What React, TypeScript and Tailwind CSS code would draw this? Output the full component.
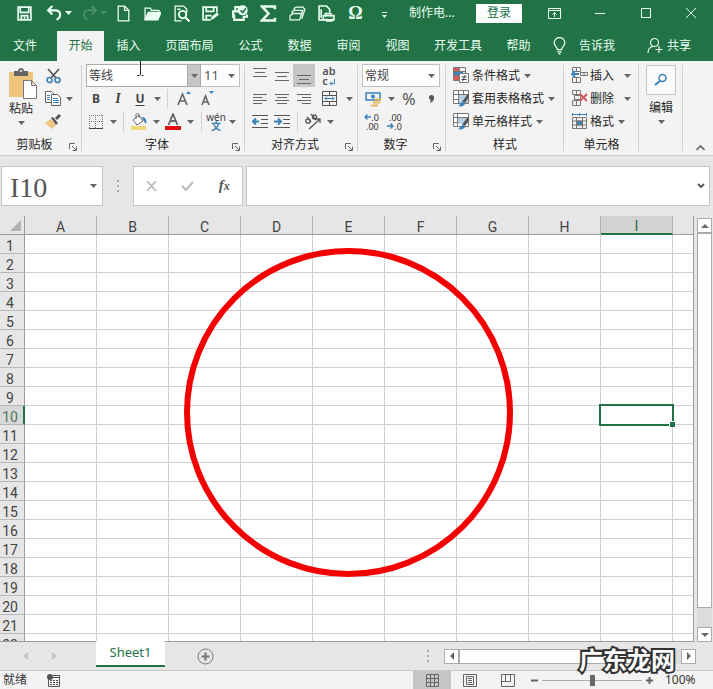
import React from "react";

type Kids = { children?: React.ReactNode };

const Caret = ({ light = false }: { light?: boolean }) => (
  <svg width="7" height="4" viewBox="0 0 7 4" className={light ? "fill-current" : "fill-[#666]"} aria-hidden="true">
    <path d="M0 0h7L3.5 4z" />
  </svg>
);

const Svg = ({ size = 17, children }: Kids & { size?: number }) => (
  <svg width={size} height={size} viewBox="0 0 16 16" fill="none" stroke="currentColor" strokeWidth="1.2" className="shrink-0" aria-hidden="true">
    {children}
  </svg>
);

const Slot = ({ label, w, children, on = false }: Kids & { label: string; w: string; on?: boolean }) => (
  <button aria-label={label} className={`flex h-full shrink-0 items-center justify-center ${w} ${on ? "bg-[#c6c6c6]" : ""}`}>
    {children}
  </button>
);

const Drop = ({ label }: { label: string }) => (
  <Slot label={label} w="w-3">
    <Caret />
  </Slot>
);

const Rule = () => <span className="h-5 w-px shrink-0 bg-[#d0d0d0]" />;

const Row = ({ children, className = "" }: Kids & { className?: string }) => (
  <div className={`flex h-[23px] items-center ${className}`}>{children}</div>
);

function Group({ title, width, launcher = false, children }: Kids & { title: string; width: string; launcher?: boolean }) {
  return (
    <section aria-label={title} className={`relative flex shrink-0 flex-col pt-[3px] ${width}`}>
      <div className="h-[69px]">{children}</div>
      <div className="flex flex-1 items-center pt-0.5">
        <span className="flex-1 text-center">{title}</span>
        {launcher && (
          <button aria-label={`${title}设置`} className="w-[13px] pt-1">
            <svg width="8" height="8" viewBox="0 0 8 8" fill="none" stroke="#666" aria-hidden="true">
              <path d="M.5 6V.5H6M3 3l4 4M7.500 3.500v4h-4" />
            </svg>
          </button>
        )}
      </div>
      <span className="absolute right-0 top-1 h-[86px] w-px bg-[#d0d0d0]" />
    </section>
  );
}

const Lines = ({ rows }: { rows: number[][] }) => (
  <svg width="14" height="16" viewBox="0 0 14 16" stroke="#666" aria-hidden="true">
    {rows.map(([y, a, b]) => (
      <path key={y} d={`M${a} ${y}.5H${b}`} />
    ))}
  </svg>
);

const quick: [string, React.ReactNode][] = [
  ["新建", <path d="M3 1h6l4 4v10H3zM9 1v4h4" />],
  ["打开", <><path d="M1 14V3h5l1 2h7v3" /><path d="M1 14 4 7h12l-3 7z" fill="currentColor" /></>],
  ["查找文档", <><path d="M13 7V4l-3-3H2v14h6M4 4h3" /><circle cx="9" cy="9" r="3.500" strokeWidth="1.800" /><path d="m11.500 11.500 4 4" strokeWidth="2" /></>],
  ["另存为", <><path d="M8 14H1V2h13v5M4 2v4h7V2M4 14v-4h5" strokeWidth="1.600" /><path d="m8 14 1-3 5-4 2 2-5 4z" fill="currentColor" stroke="none" /></>],
  ["快速打印", <><path d="M4 6V2h4M2 12V6h5M3 9v5h9v-3h3V9" strokeWidth="2" /><circle cx="11" cy="5" r="4" fill="#eafff2" strokeWidth="1.500" /><path d="m9 5 2 2 3-4" stroke="#217346" strokeWidth="1.500" /></>],
  ["求和", <path d="M14 4V1.500H2L8 8l-6 6.500h12V12" strokeWidth="2.400" />],
  ["名册", <path d="M1 10 4 8h8l-2 6H1zM3 8V6l2-1h8l-2 5M5 5V3l2-1h6l2 2-3 9" />],
  ["打印预览", <><path d="M6 14H1V1h7l3 3v3M3 4v8" strokeWidth="1.500" /><path d="M7 11V8h5v3M5 10h10v4H5zM8 13v2h5v-2" strokeWidth="1.500" /></>],
];

function TitleBar() {
  return (
    <header className="flex h-[30px] shrink-0 items-center pb-1 text-[#eafff2]">
      <button aria-label="保存" className="ml-2.5 flex w-[29px] justify-center">
        <Svg><path d="M2 2h12v12H2zM4 2v5h8V2M5 14v-4h6v4M8 11v2" strokeWidth="1.600" /></Svg>
      </button>
      <button aria-label="撤消" className="flex w-[35px] items-center justify-end gap-0.5 pr-0.5">
        <Svg><path d="M6 1 2 5l4 4M2 5h7c5 0 6 6 1 9" strokeWidth="2" /></Svg>
        <Caret light />
      </button>
      <button aria-label="恢复" className="flex w-[35px] items-center justify-end gap-0.5 pr-0.5 text-[#4b9068]">
        <Svg><path d="m10 1 4 4-4 4M14 5H7c-5 0-6 6-1 9" strokeWidth="1.800" /></Svg>
        <Caret light />
      </button>
      {quick.map(([label, art]) => (
        <button key={label} aria-label={label} className="flex w-[29px] shrink-0 justify-center"><Svg>{art}</Svg></button>
      ))}
      <button aria-label="符号" className="w-[29px] font-['Liberation_Serif',serif] text-lg font-bold leading-none">Ω</button>
      <button aria-label="自定义快速访问工具栏" className="flex w-[29px] flex-col items-center gap-0.5 pt-1">
        <span className="h-px w-[5px] bg-current" />
        <svg width="5" height="3" viewBox="0 0 5 3" className="fill-current" aria-hidden="true"><path d="M0 0h5L2.500 3z" /></svg>
      </button>
      <h1 className="ml-2.5 flex-1 truncate">制作电...</h1>
      <button className="mr-[9px] h-[19px] w-[46px] bg-white text-[#217346]">登录</button>
      <button aria-label="功能区显示选项" className="flex w-[46px] justify-center"><svg width="13" height="11" viewBox="0 0 13 11" fill="none" stroke="currentColor" aria-hidden="true"><path d="M.5.5h12v10H.5zM1 2.500h11M6.500 9V4.500M4.500 6.500l2-2 2 2" /></svg></button>
      <button aria-label="最小化" className="flex w-[46px] justify-center"><span className="h-px w-2.5 bg-current" /></button>
      <button aria-label="最大化" className="flex w-[46px] justify-center"><span className="size-2.5 border border-current" /></button>
      <button aria-label="关闭" className="flex w-11 justify-center"><svg width="10" height="10" viewBox="0 0 10 10" stroke="currentColor" aria-hidden="true"><path d="m0 0 10 10M10 0 0 10" /></svg></button>
    </header>
  );
}

function Tabs() {
  return (
    <nav className="flex h-[31px] shrink-0 items-stretch text-[#eafff2]">
      <button className="w-[50px]">文件</button>
      <button className="ml-[7px] mt-px w-[47px] bg-[#f3f3f3] text-[#217346]">开始</button>
      <button className="w-[49px]">插入</button>
      <button className="w-[73px]">页面布局</button>
      {["公式", "数据", "审阅", "视图"].map((t) => <button key={t} className="w-[49px]">{t}</button>)}
      <button className="w-[72px]">开发工具</button>
      <button className="w-[49px]">帮助</button>
      <button className="ml-[9px] flex items-center gap-3">
        <svg width="15" height="18" viewBox="0 0 14 17" fill="none" stroke="currentColor" strokeWidth="1.200" aria-hidden="true"><path d="M5 12c0-3-3-3-3-6.500a5 5 0 0 1 10 0C12 9 9 9 9 12zM5 14h4M6 16h2" /></svg>
        告诉我
      </button>
      <button className="ml-auto mr-[22px] flex items-center gap-1">
        <svg width="16" height="17" viewBox="0 0 16 17" fill="none" stroke="currentColor" strokeWidth="1.200" aria-hidden="true"><circle cx="7.500" cy="5.500" r="4" /><path d="M1 16c0-4 2-6 5-6.500M12 9v7M8.500 12.500h7" /></svg>
        共享
      </button>
    </nav>
  );
}

const Grid = ({ children }: Kids) => <svg width="17" height="17" viewBox="0 0 17 17" fill="none" stroke="#777" className="shrink-0" aria-hidden="true">{children}</svg>;

const brush = <><path d="m9 12 5-7 2-1v3l-4 6z" fill="#555" stroke="none" /><path d="M5 16c2 0 2-4 5-4l2 2c-1 2-4 3-7 2z" fill="#3b83b8" stroke="none" /></>;

const StyleRow = ({ text, art, push = "" }: { text: string; art: React.ReactNode; push?: string }) => (
  <Row>
    <button className="flex items-center gap-0.5">
      <Grid>{art}</Grid>
      {text}
      <span className={`ml-0.5 ${push}`}><Caret /></span>
    </button>
  </Row>
);

const caretBox = "pointer-events-none absolute right-1 top-0 flex h-full items-center";

function Ribbon() {
  return (
    <div className="relative flex h-[95px] shrink-0 border-b border-[#cfcfcf] bg-[#f3f3f3]">
      <Group title="剪贴板" width="w-[82px]" launcher>
        <div className="flex">
          <button className="flex w-[42px] flex-col items-center pt-1">
            <svg width="30" height="32" viewBox="0 0 30 32" className="ml-1" aria-hidden="true">
              <path d="M1 4h24v25H1z" fill="#edc57c" />
              <path d="M6 8V3h4c0-4 6-4 6 0h4v5z" fill="#666" /><circle cx="13" cy="3" r="1" fill="#fff" />
              <path d="M15.500 12.500h8l5 5v13h-13zM23.500 12.500v5h5" fill="#fff" stroke="#777" />
            </svg>
            <span className="pt-px leading-4">粘贴</span>
            <span className="flex h-3 items-center"><Caret /></span>
          </button>
          <div className="pl-px">
            <Row><Slot label="剪切" w="w-5"><svg width="15" height="16" viewBox="0 0 15 16" fill="none" strokeWidth="1.700" aria-hidden="true"><path d="m2 1 8 9M13 1 5 10" stroke="#555" /><circle cx="3.500" cy="12" r="2.500" stroke="#3b83b8" /><circle cx="11.500" cy="12" r="2.500" stroke="#3b83b8" /></svg></Slot></Row>
            <Row>
              <Slot label="复制" w="w-5"><svg width="16" height="15" viewBox="0 0 16 15" fill="#fff" stroke="#666" aria-hidden="true"><path d="M.5.5h6l3 3v8h-9z" /><path d="M6.500 3.500h6l3 3v8h-9z" /><path d="M2 4.500h3M2 6.500h3M2 8.500h3M8 7.500h5M8 9.500h6M8 11.500h6" stroke="#3b83b8" /></svg></Slot>
              <Drop label="复制选项" />
            </Row>
            <Row><Slot label="格式刷" w="w-5"><svg width="16" height="15" viewBox="0 0 16 15" aria-hidden="true"><path d="m0 9 6-4 5 6-4 4z" fill="#edc57c" /><path d="m6 4 2-1 5 6-2 2zM10 4l4-4 2 2-4 4z" fill="#555" /></svg></Slot></Row>
          </div>
        </div>
      </Group>

      <Group title="字体" width="w-[163px]" launcher>
        <Row className="ml-1 mr-[5px]">
          <div className="flex h-full w-[115px] border border-[#ababab] bg-white">
            <input aria-label="字体名称" defaultValue="等线" className="w-0 flex-1 pl-0.5 text-[#444] outline-none" />
            <button aria-label="选择字体" className="flex w-[13px] items-center justify-center border-l border-[#ababab] bg-[#c6c6c6]"><Caret /></button>
          </div>
          <div className="relative h-full flex-1 border-y border-r border-[#c0c0c0] bg-white">
            <select aria-label="字号" className="size-full appearance-none pl-[3px] text-[13px] text-[#555] outline-none"><option>11</option></select>
            <span className={caretBox}><Caret /></span>
          </div>
        </Row>
        <Row className="pl-[3px] text-[#444]">
          <Slot label="加粗" w="w-[22px]"><b>B</b></Slot>
          <Slot label="倾斜" w="w-[22px]"><i className="font-['Liberation_Serif',serif] text-sm font-bold">I</i></Slot>
          <Slot label="下划线" w="w-[22px]"><b className="underline underline-offset-2">U</b></Slot>
          <Drop label="下划线选项" />
          <span className="w-1" /><Rule /><span className="w-1" />
          <Slot label="增大字号" w="w-6"><svg width="15" height="16" viewBox="0 0 15 16" fill="none" strokeWidth="1.600" stroke="#666" aria-hidden="true"><path d="M1 14 5.500 3 10 14M3 10h5" /><path d="m9 3 2.500-3L14 3z" fill="#3b83b8" stroke="none" /></svg></Slot>
          <Slot label="减小字号" w="w-6"><svg width="15" height="16" viewBox="0 0 15 16" fill="none" strokeWidth="1.600" stroke="#666" aria-hidden="true"><path d="M1 14 4.500 5 8 14M2.500 11h4" /><path d="m8 0 2.500 3L13 0z" fill="#3b83b8" stroke="none" /></svg></Slot>
        </Row>
        <Row className="pl-[3px]">
          <Slot label="边框" w="w-[22px]"><svg width="14" height="14" viewBox="0 0 14 14" fill="none" stroke="#777" aria-hidden="true"><path d="M0 .5h14M0 6.500h14M.5 0v13M6.500 0v13M13.500 0v13" strokeDasharray="1 1" /><path d="M0 13.500h14" stroke="#444" /></svg></Slot>
          <Drop label="边框选项" />
          <span className="w-1" /><Rule /><span className="w-1" />
          <Slot label="填充颜色" w="w-[22px]"><svg width="16" height="17" viewBox="0 0 16 17" fill="none" aria-hidden="true"><path d="M0 13h15v4H0z" fill="#f0d878" /><path d="m2 7 6-5 4 6-6 4zM5 6V2c0-2 3-2 3 0v3" stroke="#666" fill="#fff" /><path d="M11 4c4 0 5 4 4 7l-3-4z" fill="#3b83b8" /></svg></Slot>
          <Drop label="填充颜色选项" />
          <Slot label="字体颜色" w="w-[22px]"><svg width="16" height="17" viewBox="0 0 16 17" aria-hidden="true"><path d="M0 13h16v4H0z" fill="#e20d0d" /><path d="M3.500 12 8 1l4.500 11M5 8h6" fill="none" stroke="#666" strokeWidth="1.800" /></svg></Slot>
          <Drop label="字体颜色选项" />
          <span className="w-[5px]" /><Rule /><span className="w-1" />
          <Slot label="拼音指南" w="w-5"><span className="flex flex-col items-center text-[10px] leading-[9px] text-[#444]">wén<b className="leading-[9px] text-[#3b83b8]">文</b></span></Slot>
          <Drop label="拼音选项" />
        </Row>
      </Group>

      <Group title="对齐方式" width="w-[113px]" launcher>
        <Row className="pl-1">
          <Slot label="顶端对齐" w="w-[22px]"><Lines rows={[[0, 0, 14], [4, 2, 12], [8, 0, 14]]} /></Slot>
          <Slot label="垂直居中" w="w-[22px]"><Lines rows={[[4, 0, 14], [8, 2, 12], [12, 0, 14]]} /></Slot>
          <Slot label="底端对齐" w="w-[22px]" on><Lines rows={[[7, 0, 14], [11, 2, 12], [15, 0, 14]]} /></Slot>
          <Slot label="自动换行" w="w-[28px]">
            <span className="flex flex-col items-start text-[11px] font-semibold leading-[10px] text-[#555]">
              <span>ab</span>
              <span className="flex items-end gap-px">c<svg width="6" height="7" viewBox="0 0 6 7" fill="none" stroke="#3b83b8" aria-hidden="true"><path d="M5.500 0v4.500H1M3 2.500l-2 2 2 2" /></svg></span>
            </span>
          </Slot>
        </Row>
        <Row className="pl-1">
          <Slot label="左对齐" w="w-[22px]"><Lines rows={[[3, 0, 14], [6, 0, 9], [9, 0, 14], [12, 0, 9]]} /></Slot>
          <Slot label="居中" w="w-[22px]"><Lines rows={[[3, 0, 14], [6, 2, 12], [9, 0, 14], [12, 2, 12]]} /></Slot>
          <Slot label="右对齐" w="w-[22px]"><Lines rows={[[3, 0, 14], [6, 5, 14], [9, 0, 14], [12, 5, 14]]} /></Slot>
          <Slot label="合并后居中" w="w-[28px]"><svg width="15" height="15" viewBox="0 0 15 15" fill="none" stroke="#555" aria-hidden="true"><path d="M.5.5h14v14H.5zM1 4.500h13M1 10.500h13M7.500 0v4M7.500 11v4" /><path d="M3 7.500h9M5 5.500l-2 2 2 2M10 5.500l2 2-2 2" stroke="#3b83b8" /></svg></Slot>
          <Drop label="合并选项" />
        </Row>
        <Row className="pl-1">
          <Slot label="减少缩进量" w="w-[22px]"><svg width="16" height="13" viewBox="0 0 16 13" fill="none" stroke="#555" aria-hidden="true"><path d="M0 .5h16M9 4.500h7M9 8.500h7M0 12.500h16" /><path d="M7 6.500H1M4 3.500l-3 3 3 3" stroke="#3b83b8" strokeWidth="2" /></svg></Slot>
          <Slot label="增加缩进量" w="w-[22px]"><svg width="16" height="13" viewBox="0 0 16 13" fill="none" stroke="#555" aria-hidden="true"><path d="M0 .5h16M9 4.500h7M9 8.500h7M0 12.500h16" /><path d="M0 6.500h6M4 3.500l3 3-3 3" stroke="#3b83b8" strokeWidth="2" /></svg></Slot>
          <span className="w-1" /><Rule /><span className="w-1" />
          <Slot label="方向" w="w-[22px]"><svg width="18" height="17" viewBox="0 0 18 17" fill="none" stroke="#555" strokeWidth="1.300" aria-hidden="true"><circle cx="4" cy="8" r="2.200" /><path d="m3 4 4 5M7 1l5 6M5 16 16 6M16 10V6h-4" /><circle cx="10.500" cy="4" r="2" /></svg></Slot>
          <Drop label="方向选项" />
        </Row>
      </Group>

      <Group title="数字" width="w-[88px]" launcher>
        <Row className="ml-1 mr-1.5">
          <div className="relative size-full border border-[#c0c0c0] bg-white">
            <select aria-label="数字格式" className="size-full appearance-none pl-0.5 text-[#444] outline-none"><option>常规</option></select>
            <span className={caretBox}><Caret /></span>
          </div>
        </Row>
        <Row className="pl-1">
          <Slot label="会计数字格式" w="w-[23px]"><svg width="17" height="16" viewBox="0 0 17 16" fill="none" aria-hidden="true"><path d="M1 2h14v7H1z" stroke="#3b83b8" strokeWidth="1.500" /><circle cx="8" cy="5.500" r="2" fill="#3b83b8" /><path d="M10 8.500h6M8 11.500h7M6 14.500h7" stroke="#e8b657" strokeWidth="2" /></svg></Slot>
          <Drop label="会计格式选项" />
          <Slot label="百分比样式" w="w-6"><span className="text-base text-[#555]">%</span></Slot>
          <Slot label="千位分隔样式" w="w-5"><svg width="5" height="8" viewBox="0 0 5 8" fill="#555" aria-hidden="true"><circle cx="2.500" cy="2.500" r="2.500" /><path d="M5 2c0 3-1 5-4 6l1-4z" /></svg></Slot>
        </Row>
        <Row className="pl-0.5 text-[9px] leading-[9px] text-[#333]">
          <Slot label="增加小数位数" w="w-[23px]">
            <span className="flex flex-col items-end">
              <span className="flex items-center"><svg width="7" height="6" viewBox="0 0 7 6" fill="none" stroke="#3b83b8" strokeWidth="1.400" aria-hidden="true"><path d="M7 3H1M3.500.500 1 3l2.500 2.500" /></svg>.0</span>
              <span>.00</span>
            </span>
          </Slot>
          <Slot label="减少小数位数" w="w-[23px]">
            <span className="flex flex-col items-end">
              <span>.00</span>
              <span className="flex items-center"><svg width="7" height="6" viewBox="0 0 7 6" fill="none" stroke="#3b83b8" strokeWidth="1.400" aria-hidden="true"><path d="M0 3h6M3.500.500 6 3 3.500 5.500" /></svg>.0</span>
            </span>
          </Slot>
        </Row>
      </Group>

      <Group title="样式" width="w-[118px]">
        <div className="pl-[7px]">
          <StyleRow text="条件格式" art={<><path d="M.5.5h12v13H.5zM.5 4.500h12M.5 8.500h12M6.500.500v13" /><path d="M1 1h5v3H1zM1 9h5v4H1z" fill="#d9595a" stroke="none" /><path d="M1 5h9v3H1z" fill="#3b83b8" stroke="none" /><path d="M6.500 6.500h9v9h-9z" fill="#fff" /><path d="M8.500 10h5M8.500 12.500h5M12.500 8l-3 6" stroke="#444" /></>} />
          <StyleRow text="套用表格格式" art={<><path d="M.5.5h15v13H.5zM.5 4.500h15M.5 9.500h15M5.500.500v13M10.500.500v13" fill="#fff" /><path d="M6 5h9v8H6z" fill="#b6d0e5" stroke="none" />{brush}</>} />
          <StyleRow text="单元格样式" art={<><path d="M.5.5h15v13H.5zM.5 4.500h15M4.500.500v13M.5 9.500h15" fill="#fff" /><path d="M5 5h9v6H5z" fill="#b6d0e5" stroke="none" />{brush}</>} />
        </div>
      </Group>

      <Group title="单元格" width="w-[75px]">
        <div className="pl-[7px]">
          <StyleRow text="插入" push="pl-1.5" art={<><path d="M1.500.500h8v4h-8zM5.500.500v4M1.500 10.500h8v5h-8zM5.500 10v5M9.500 5.500h7v3h-7zM13 5v3" /><path d="M8 7H1M4 4 1 7l3 3" stroke="#3b83b8" strokeWidth="1.800" /></>} />
          <StyleRow text="删除" push="pl-1.5" art={<><path d="M1.500.500h8v4h-8zM5.500.500v4M1.500 10.500h8v5h-8zM5.500 10v5M3.500 5.500h6v4h-6z" /><path d="m9 4 7 7M16 4l-7 7" stroke="#d9595a" strokeWidth="2" /></>} />
          <StyleRow text="格式" art={<><path d="M1.500 4.500h14v11h-14zM1 8h15M1 12h15M5.500 4v12M11.500 4v12" /><path d="M6 8h5v4H6z" fill="#3b83b8" /><path d="M1 1.500h14M1.500 0v3M8.500 0v3M15.500 0v3" stroke="#3b83b8" /></>} />
        </div>
      </Group>

      <section aria-label="编辑" className="relative flex w-11 shrink-0 flex-col items-center pt-1">
        <button className="flex flex-col items-center">
          <span className="flex size-[30px] items-center justify-center border border-[#c6c6c6] bg-[#fbfbfb]">
            <svg width="14" height="14" viewBox="0 0 14 14" fill="none" stroke="#3b83b8" aria-hidden="true"><circle cx="8.500" cy="5" r="3.500" strokeWidth="1.500" /><path d="m6 8-5 4" strokeWidth="2" /></svg>
          </span>
          <span className="pt-[3px] leading-5">编辑</span>
          <span className="flex h-2 items-center"><Caret /></span>
        </button>
        <span className="absolute right-0 top-1 h-[86px] w-px bg-[#d0d0d0]" />
      </section>
      <button aria-label="折叠功能区" className="ml-auto mr-2 self-end pb-1">
        <svg width="9" height="6" viewBox="0 0 9 6" fill="none" stroke="#666" strokeWidth="1.600" aria-hidden="true"><path d="m.5 5 4-4 4 4" /></svg>
      </button>
      <svg width="7" height="16" viewBox="0 0 7 16" fill="none" stroke="#222" className="pointer-events-none absolute left-[137px] top-0" aria-hidden="true"><path d="M3.500 0v14M.5 14.500h2M4.500 14.500h2" /></svg>
    </div>
  );
}

const Dots = () => (
  <span className="flex flex-col gap-[3px]">
    {[0, 1, 2].map((n) => <i key={n} className="size-0.5 bg-[#aaa]" />)}
  </span>
);

function FormulaBar() {
  return (
    <div className="flex h-[60px] shrink-0 py-2.5 pl-px pr-[3px]">
      <div className="flex w-[102px] items-center border border-[#c6c6c6] bg-white">
        <input aria-label="名称框" defaultValue="I10" className="w-0 flex-1 pl-2 pt-1 font-['Liberation_Serif',serif] text-[28px] leading-8 text-[#555] outline-none" />
        <button aria-label="名称列表" className="mr-[5px]"><Caret /></button>
      </div>
      <div className="flex w-[30px] items-center justify-center"><Dots /></div>
      <div className="flex w-[110px] items-center justify-around border border-[#c6c6c6] bg-white">
        <button aria-label="取消"><svg width="11" height="10" viewBox="0 0 11 10" stroke="#bbb" strokeWidth="1.800" aria-hidden="true"><path d="m1 0 9 10M10 0 1 10" /></svg></button>
        <button aria-label="输入"><svg width="13" height="10" viewBox="0 0 13 10" fill="none" stroke="#bbb" strokeWidth="2.200" aria-hidden="true"><path d="m1 5 4 4 7-8" /></svg></button>
        <button aria-label="插入函数" className="font-['Liberation_Serif',serif] text-[15px] font-bold italic leading-none text-[#555]">f<span className="text-xs">x</span></button>
      </div>
      <div className="ml-[3px] flex flex-1 items-center border border-[#c6c6c6] bg-white">
        <input aria-label="编辑栏" className="w-0 flex-1 self-stretch px-2 outline-none" />
        <button aria-label="展开编辑栏" className="mr-1"><svg width="8" height="6" viewBox="0 0 8 6" fill="none" stroke="#555" strokeWidth="1.800" aria-hidden="true"><path d="m1 1 3 3 3-3" /></svg></button>
      </div>
    </div>
  );
}

const cols = "ABCDEFGHI".split("");
const rows = Array.from({ length: 22 }, (_, n) => n + 1);

const Arrow = ({ d, label, className = "" }: { d: string; label: string; className?: string }) => (
  <button aria-label={label} className={`flex size-[15px] shrink-0 items-center justify-center border border-[#ababab] bg-white ${className}`}>
    <svg width="8" height="8" viewBox="0 0 8 8" fill="#666" aria-hidden="true"><path d={d} /></svg>
  </button>
);

function Sheet() {
  return (
    <div className="flex min-h-0 flex-1">
      <div className="relative min-w-0 flex-1 overflow-hidden border-b border-[#9b9b9b]">
        <table className="w-full table-fixed border-separate border-spacing-0 border-r border-[#9b9b9b] bg-white font-[Roboto,sans-serif] text-sm leading-none">
          <colgroup>
            <col className="w-[25px]" />
            {cols.map((c) => <col key={c} className="w-[72px]" />)}
            <col />
          </colgroup>
          <thead>
            <tr className="h-[19px] text-[#444]">
              <th aria-label="全选" className="border-b border-r border-[#9b9b9b] bg-[#e6e6e6] p-0">
                <svg width="11" height="11" viewBox="0 0 11 11" className="ml-auto mr-[3px] fill-[#b2b2b2]" aria-hidden="true"><path d="M11 0v11H0z" /></svg>
              </th>
              {cols.map((c) => (
                <th key={c} scope="col" className={`border-r border-r-[#b0b0b0] p-0 pt-[3px] font-normal ${c === "I" ? "border-b-2 border-b-[#217346] bg-[#d2d2d2] text-[#217346]" : "border-b border-b-[#9b9b9b] bg-[#e6e6e6]"}`}>{c}</th>
              ))}
              <th aria-label="J" className="border-b border-[#9b9b9b] bg-[#e6e6e6] p-0" />
            </tr>
          </thead>
          <tbody>
            {rows.map((r) => (
              <tr key={r} className="h-[19px]">
                <th scope="row" className={`border-b border-b-[#b8b8b8] p-0 pt-[3px] font-normal ${r === 10 ? "border-r-2 border-r-[#217346] bg-[#d8d8d8] pr-[3px] text-[#4f7a63]" : "border-r border-r-[#9b9b9b] bg-[#e6e6e6] pr-1 text-[#444]"}`}>{r}</th>
                {cols.map((c) => (
                  <td key={c} className="relative border-b border-r border-[#d0d0d0] p-0">
                    {c === "I" && r === 10 && (
                      <span className="absolute -inset-0.5 z-10 border-2 border-[#217346]">
                        <i className="absolute -bottom-[3px] -right-[3px] size-1.5 border-l border-t border-white bg-[#217346]" />
                      </span>
                    )}
                  </td>
                ))}
                <td className="border-b border-[#d0d0d0] p-0" />
              </tr>
            ))}
          </tbody>
        </table>
        <svg width="330" height="330" viewBox="0 0 330 330" fill="none" className="absolute left-[184px] top-8" role="img" aria-label="红色圆形">
          <circle cx="164.500" cy="164.500" r="161.500" stroke="#f40000" strokeWidth="6" />
        </svg>
      </div>
      <div className="ml-[3px] mr-px mt-0.5 flex flex-col bg-[#dcdcdc]">
        <Arrow label="向上滚动" d="M0 6h8L4 2z" />
        <div className="flex-1 border border-[#ababab] bg-white" />
        <div className="h-[19px]" />
        <Arrow label="向下滚动" d="M0 2h8L4 6z" />
      </div>
    </div>
  );
}

function SheetTabs() {
  return (
    <div className="relative flex h-7 shrink-0 items-center">
      <button aria-label="上一个工作表" className="flex w-[50px] justify-center"><svg width="5" height="8" viewBox="0 0 5 8" fill="#c0c0c0" aria-hidden="true"><path d="M5 0v8L0 4z" /></svg></button>
      <button aria-label="下一个工作表" className="flex w-[46px] pl-0.5"><svg width="5" height="8" viewBox="0 0 5 8" fill="#c0c0c0" aria-hidden="true"><path d="M0 0v8l5-4z" /></svg></button>
      <button className="-mt-px h-[26px] w-[69px] self-start border-b-2 border-[#217346] bg-white text-[13px] text-[#217346]">Sheet1</button>
      <button aria-label="新工作表" className="ml-8"><svg width="17" height="17" viewBox="0 0 17 17" fill="none" stroke="#777" aria-hidden="true"><circle cx="8.500" cy="8.500" r="7.500" /><path d="M8.500 4.500v8M4.500 8.500h8" strokeWidth="2" /></svg></button>
      <div className="ml-auto"><Dots /></div>
      <div className="ml-[15px] mr-[17px] flex w-[252px] bg-[#dcdcdc]">
        <Arrow label="向左滚动" d="M6 0v8L2 4z" />
        <div className="w-44 border border-[#ababab] bg-white" />
        <Arrow label="向右滚动" d="M2 0v8l4-4z" className="ml-auto" />
      </div>
      <strong className="absolute right-[38px] top-0.5 z-10 whitespace-nowrap text-2xl font-bold leading-8 text-white [-webkit-text-stroke:4px_#333] [paint-order:stroke_fill]">广东龙网</strong>
    </div>
  );
}

function StatusBar() {
  return (
    <footer className="flex h-[19px] shrink-0 items-center border-t border-[#c6c6c6] bg-[#f3f3f3] text-[#333]">
      <span className="pl-[3px]">就绪</span>
      <button aria-label="录制宏" className="ml-5"><svg width="14" height="13" viewBox="0 0 14 13" fill="none" stroke="#555" aria-hidden="true"><path d="M1.500 3.500h11v9h-11z" /><path d="M3 6.500h8M3 8.500h8M3 10.500h8" strokeDasharray="2 1" /><path d="M6 1.500h7M12.500 1v3" /><circle cx="3" cy="3" r="3" fill="#555" stroke="none" /></svg></button>
      <button aria-label="普通视图" className="ml-auto flex h-full w-[38px] items-center justify-center bg-[#c6c6c6]"><svg width="13" height="13" viewBox="0 0 13 13" fill="none" stroke="#666" aria-hidden="true"><path d="M.5.5h12v12H.5zM.5 4.500h12M.5 8.500h12M4.500.500v12M8.500.500v12" /></svg></button>
      <button aria-label="页面布局视图" className="flex w-[38px] justify-center"><svg width="14" height="13" viewBox="0 0 14 13" fill="none" stroke="#666" aria-hidden="true"><path d="M.5.5h13v12H.5zM3.500 2.500h7v8h-7zM5 4.500h4M5 6.500h4M5 8.500h4" /></svg></button>
      <button aria-label="分页预览" className="flex w-[38px] justify-center"><svg width="14" height="13" viewBox="0 0 14 13" fill="none" stroke="#666" aria-hidden="true"><path d="M.5.5h13v12H.5zM4.500.500v7h5v-7M.500 7.500h4" /></svg></button>
      <button aria-label="缩小" className="ml-1 mr-1"><svg width="7" height="7" viewBox="0 0 7 7" stroke="#666" strokeWidth="2" aria-hidden="true"><path d="M0 3.500h7" /></svg></button>
      <input type="range" aria-label="缩放" min="0" max="100" defaultValue="50" className="h-3 w-[100px] appearance-none bg-transparent bg-[linear-gradient(#aaa,#aaa)] bg-[length:100%_1px] bg-center bg-no-repeat [&::-webkit-slider-thumb]:h-[11px] [&::-webkit-slider-thumb]:w-[5px] [&::-webkit-slider-thumb]:appearance-none [&::-webkit-slider-thumb]:bg-[#666]" />
      <button aria-label="放大" className="ml-1"><svg width="7" height="7" viewBox="0 0 7 7" stroke="#666" strokeWidth="2" aria-hidden="true"><path d="M0 3.500h7M3.500 0v7" /></svg></button>
      <span className="w-[60px] pl-3">100%</span>
    </footer>
  );
}

export default function App() {
  return (
    <div className="flex h-screen flex-col overflow-hidden bg-[#e6e6e6] font-['Noto_Sans','Noto_Sans_CJK_SC',sans-serif] text-xs text-[#262626]">
      <div className="bg-[#217346]">
        <TitleBar />
        <Tabs />
      </div>
      <Ribbon />
      <FormulaBar />
      <Sheet />
      <SheetTabs />
      <StatusBar />
    </div>
  );
}
